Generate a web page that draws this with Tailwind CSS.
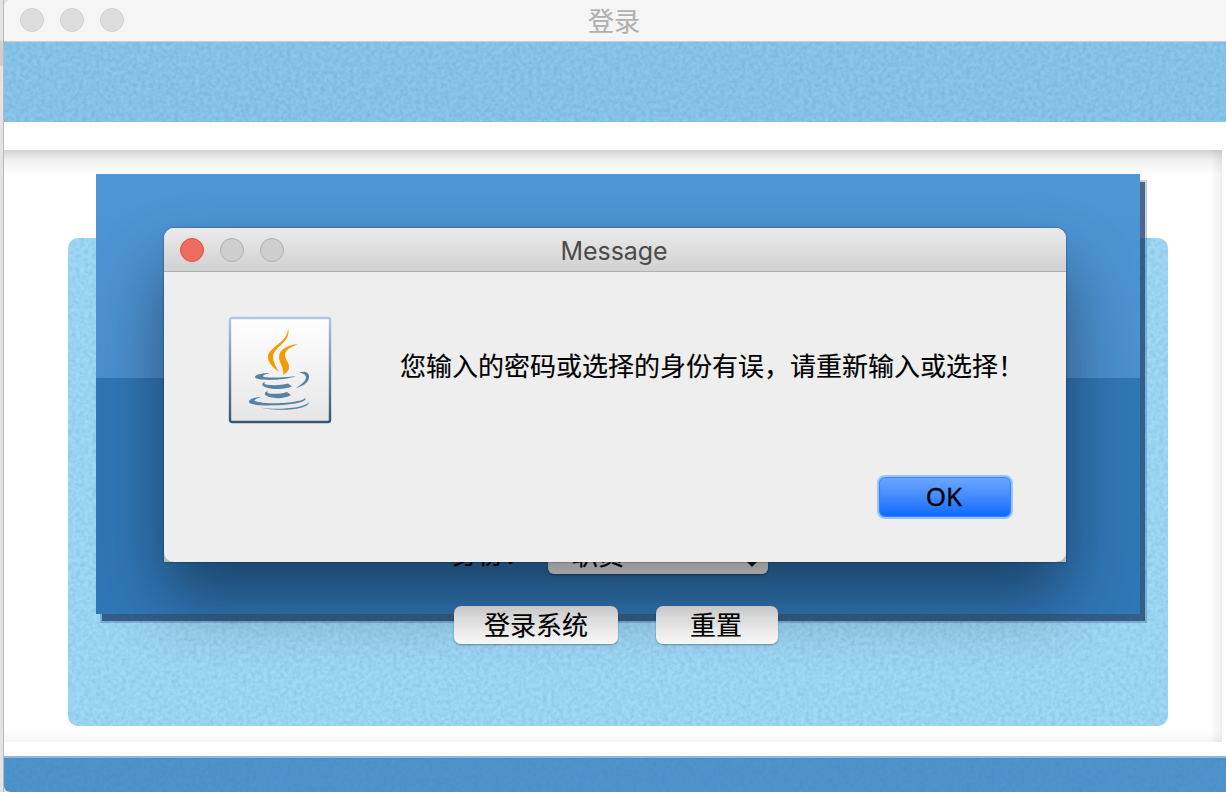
<!DOCTYPE html>
<html lang="zh-CN">
<head>
<meta charset="utf-8">
<title>登录</title>
<script src="https://cdn.jsdelivr.net/npm/@tailwindcss/browser@4"></script>
</head>
<body class="relative flex h-[792px] w-[1226px] overflow-hidden bg-[#e3e3e3] font-['Noto_Sans','Noto_Sans_CJK_SC',sans-serif] text-[26px] text-black [-webkit-text-stroke:0.15px]">
<svg class="absolute size-0" aria-hidden="true">
  <filter id="paper" x="0" y="0" width="100%" height="100%" color-interpolation-filters="sRGB">
    <feTurbulence type="fractalNoise" baseFrequency="0.24" numOctaves="3" seed="4"/>
    <feColorMatrix values="0 0 0 0 0.05  0 0 0 0 0.25  0 0 0 0 0.42  0.21 0 0 0 -0.065"/>
  </filter>
</svg>
<div class="w-1 shrink-0 border-r border-[#bababa]"><div class="mt-[41px] h-[25px] bg-[#cfcfcf]"></div></div>
<main class="flex h-full min-w-0 flex-1 flex-col overflow-hidden rounded-tl-lg rounded-bl-md bg-white">
  <header class="relative flex h-[42px] shrink-0 items-center justify-center border-b border-[#cecece] bg-[#f5f5f5] text-[#b0b0b0]">
    <div class="absolute left-4 top-2 flex gap-4">
      <span class="size-6 rounded-full border border-[#cecece] bg-[#dddddd]"></span>
      <span class="size-6 rounded-full border border-[#cecece] bg-[#dddddd]"></span>
      <span class="size-6 rounded-full border border-[#cecece] bg-[#dddddd]"></span>
    </div>
    <h1 class="mr-0.5 mb-0.5 leading-10 font-['Noto_Sans_CJK_SC',sans-serif]">登录</h1>
  </header>
  <div class="h-20 shrink-0 bg-[#8ac7ec]"><svg class="size-full"><rect width="100%" height="100%" filter="url(#paper)"/></svg></div>
  <section class="relative mt-7 h-[592px] w-[1218px] shrink-0 bg-linear-to-b from-[#d2d2d2] via-[#f0f0f0] via-[10px] to-white to-[25px] px-16 pt-[88px]">
    <div class="absolute inset-y-0 right-0 w-3 bg-linear-to-l from-black/6 to-transparent"></div>
    <div class="absolute inset-x-0 bottom-0 h-3 bg-linear-to-t from-black/4 to-transparent"></div>
    <div class="h-[488px] w-[1100px] overflow-hidden rounded-[10px] bg-[#a0d9f7]"><svg class="size-full"><rect width="100%" height="100%" filter="url(#paper)"/></svg></div>
    <div class="absolute left-[92px] top-6 h-[440px] w-[1044px]">
      <div class="absolute -bottom-[9px] -right-[7px] left-1 top-1.5 border-2 border-[#163e6b]/25 bg-[#163e6b]/78 bg-clip-padding"></div>
      <div class="relative flex h-full flex-col">
        <div class="h-[204px] bg-linear-to-b from-[#4e96d5] to-[#4b8fcf]"></div>
        <div class="flex-1 bg-[#3077b7]"></div>
      </div>
    </div>
    <form class="absolute left-[444px] top-[382px] font-['Noto_Sans_CJK_SC',sans-serif]">
      <div class="flex h-[42px] items-end">
        <label class="w-[100px] pl-1 leading-[42px] whitespace-nowrap">身份：</label>
        <div class="flex h-10 w-[220px] items-center justify-between rounded-md bg-linear-to-b from-[#eeeeee] to-[#f7f7f7] pl-6 pr-2 shadow-[0_1px_2px_#0006]">
          <span class="-mt-px">职员</span>
          <svg width="16" height="30" viewBox="0 0 16 30" fill="none" stroke="#222" stroke-width="3.4"><path d="M3 9l5-5 5 5M3 20.500l5 5 5-5"/></svg>
        </div>
      </div>
      <div class="mt-8 ml-1.5 flex gap-[38px]">
        <button type="button" class="h-[38px] w-[164px] rounded-[7px] bg-linear-to-b from-[#f2f2f2] to-white pb-0.5 leading-9 shadow-[0_1px_2px_#0005]">登录系统</button>
        <button type="button" class="h-[38px] w-[122px] rounded-[7px] bg-linear-to-b from-[#f2f2f2] to-white pr-0.5 pb-0.5 leading-9 shadow-[0_1px_2px_#0005]">重置</button>
      </div>
    </form>
  </section>
  <footer class="mt-3.5 h-9 shrink-0 border-t-2 border-[#8ab9db] bg-[#4e94cc]"><svg class="size-full opacity-55"><rect width="100%" height="100%" filter="url(#paper)"/></svg></footer>
</main>
<div role="dialog" class="absolute left-[164px] top-[228px] h-[334px] w-[902px] rounded-t-[10px] bg-[#bcbcbc] shadow-[0_36px_68px_-2px_#00000075,0_0_2px_#0009]">
  <div class="flex h-full flex-col overflow-hidden rounded-[10px] bg-[#eeeeee]">
    <div class="relative flex h-11 shrink-0 items-center justify-center border-b border-[#b0b0b0] bg-linear-to-b from-[#ebebeb] to-[#d1d1d1] text-[#4b4b4b]">
      <div class="absolute left-4 top-2.5 flex gap-4">
        <span class="size-6 rounded-full border border-[#df5148] bg-[#ee6b60]"></span>
        <span class="size-6 rounded-full border border-[#b0b0b0] bg-[#cecece]"></span>
        <span class="size-6 rounded-full border border-[#b0b0b0] bg-[#cecece]"></span>
      </div>
      <h2 class="mt-0.5 mr-0.5 font-['Inter',sans-serif] text-[25px] leading-10 tracking-[-0.1px] [-webkit-text-stroke:0]">Message</h2>
    </div>
    <div class="flex h-[204px] items-start pl-16 pt-11">
      <svg class="shrink-0" width="104" height="108" viewBox="0 0 104 108">
        <defs>
          <linearGradient id="face" x2="0" y2="1"><stop stop-color="#fff"/><stop offset="1" stop-color="#e6e6e6"/></linearGradient>
          <linearGradient id="edge" x2="0" y2="1"><stop stop-color="#b1c5dd"/><stop offset=".5" stop-color="#758da6"/><stop offset="1" stop-color="#38566f"/></linearGradient>
        </defs>
        <rect x="2" y="2" width="100" height="104" rx="2" fill="url(#face)" stroke="url(#edge)" stroke-width="2.4"/>
        <path fill="#f59b00" d="M60 12C64 26 45 31 45 41C45 46 48 51 51 56C45 51 40 47 40 41C40 31 61 26 60 12ZM70 28C63 31 57 34 57 39C57 44 61 46 61 51C61 55 58 57 55 59C57 53 51 47 51 41C51 33 60 29 70 28Z"/>
        <g fill="#5782a3">
          <path d="M42 57C33 57 27 59 27 61C27 65 56 65 68 60C53 62 34 62 35 60C35 59 38 58 42 57Z"/>
          <path d="M71 57C77 54 82 57 81 62C80 67 75 70 68 72C74 68 78 65 78 61C77 58 75 57 71 57Z"/>
          <path d="M37 66C33 67 34 70 37 71C44 74 58 73.500 64 70.500L60 67.500C53 69.500 43 69.500 38 68.500C36 68 36 67 37 66Z"/>
          <path d="M40 75C36 76 36 79 39 80C45 83 57 83 63 79L59 76C54 78 46 78 41 77.500C39 77 39 76 40 75Z"/>
          <path d="M33 81C26 81 20 84 21 86C22 90 44 90 59 88.500C74 87 79 84 77 82C75 86 52 88 37 87C29 86 25 85 27 84C28 82 31 82 33 81Z"/>
          <path d="M32 91.500C46 94 76 93 81 86C81 94 50 96 32 91.500Z"/>
        </g>
      </svg>
      <p class="ml-[68px] mt-[29px] font-['Noto_Sans_CJK_SC',sans-serif] leading-10 whitespace-nowrap">您输入的密码或选择的身份有误，请重新输入或选择！</p>
    </div>
    <div class="flex justify-end pr-[53px]">
      <button type="button" class="-mt-px h-11 w-[136px] rounded-lg border-2 border-[#9ac5f2] bg-linear-to-b from-[#6da7ff] to-[#0468ff] pr-0.5 pb-0.5 leading-[38px] shadow-[inset_0_0_1px_1px_#3187ff] [-webkit-text-stroke:0.3px]">OK</button>
    </div>
  </div>
</div>
</body>
</html>
